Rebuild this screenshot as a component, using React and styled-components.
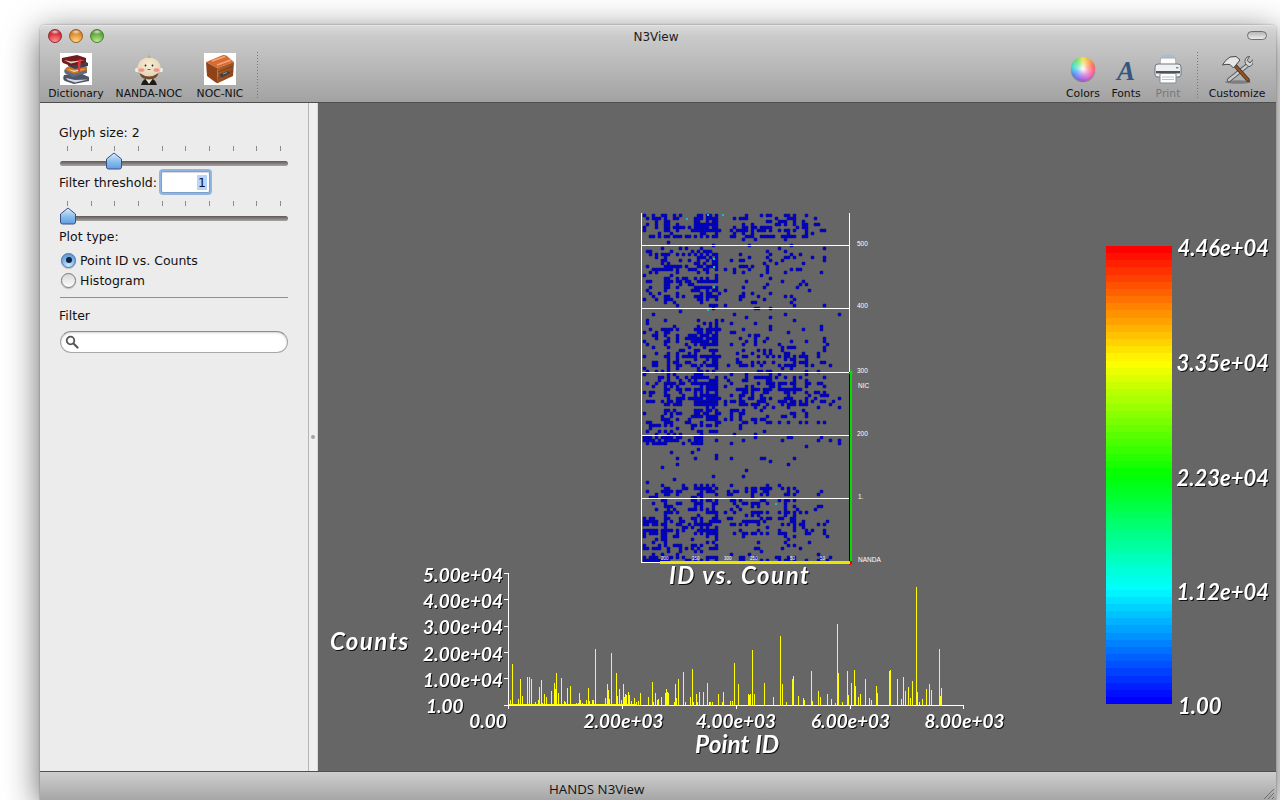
import React from 'react'
import styled, { createGlobalStyle } from 'styled-components'

const GlobalStyle = createGlobalStyle`
  html, body { margin: 0; height: 100%; background: #fff; overflow: hidden; }
  #root { height: 100%; }
  * { box-sizing: border-box; }
`

const UI_FONT = '"DejaVu Sans", "Liberation Sans", sans-serif'

const Page = styled.div`
  height: 800px;
  padding: 25px 4px 0 40px;
  font-family: ${UI_FONT};
  color: #111;
`
const Window = styled.div`
  height: 775px;
  display: flex;
  flex-direction: column;
  border-radius: 5px 5px 0 0;
  box-shadow: 0 8px 34px rgba(0, 0, 0, 0.62), 0 0 2px rgba(0, 0, 0, 0.4);
`
const Head = styled.header`
  height: 78px;
  flex: none;
  display: flex;
  flex-direction: column;
  border-radius: 5px 5px 0 0;
  background: linear-gradient(#d9d9d9 0, #cbcbcb 10px, #a2a2a2 100%);
  border-top: 1px solid #e6e6e6;
  border-bottom: 1px solid #4e4e4e;
`
const TitleBar = styled.div`
  height: 21px;
  flex: none;
  position: relative;
  display: flex;
  align-items: center;
  justify-content: center;
`
const Lights = styled.div`
  position: absolute;
  left: 8px;
  top: 3px;
  display: flex;
  gap: 7px;
`
const Light = styled.span`
  width: 14px;
  height: 14px;
  border-radius: 50%;
  border: 1px solid ${(p) => p.$edge};
  background:
    radial-gradient(ellipse 5px 2.5px at 50% 15%, rgba(255, 255, 255, 0.75) 0, rgba(255, 255, 255, 0) 100%),
    radial-gradient(circle at 50% 100%, ${(p) => p.$glow} 0, ${(p) => p.$base} 65%, ${(p) => p.$edge} 100%);
`
const Title = styled.span`
  font-size: 12px;
  color: #1c1c1c;
  position: relative;
  left: -2px;
`
const Pill = styled.span`
  position: absolute;
  right: 9px;
  top: 5px;
  width: 20px;
  height: 9px;
  border-radius: 5px;
  border: 1px solid #6d6d6d;
  background: linear-gradient(#b5b5b5, #ececec);
`
const ToolBar = styled.div`
  flex: 1;
  display: flex;
  align-items: flex-start;
`
const ToolGroup = styled.div`
  display: flex;
  width: ${(p) => p.$w}px;
  flex: none;
`
const Spring = styled.div`
  flex: 1;
`
const Tool = styled.div`
  width: ${(p) => p.$w}px;
  flex: none;
  display: flex;
  flex-direction: column;
  align-items: center;
  font-size: 10.8px;
  line-height: 13px;
  white-space: nowrap;
  color: ${(p) => (p.$off ? '#777' : '#111')};
`
const ToolIcon = styled.svg`
  width: 32px;
  height: 32px;
  margin: 6px 0 2px;
  display: block;
  flex: none;
`
const ColorWheel = styled.span`
  width: 24px;
  height: 24px;
  margin: 10px 4px 6px;
  flex: none;
  display: block;
  border-radius: 50%;
  background:
    radial-gradient(circle, #fff 0, rgba(255, 255, 255, 0.45) 32%, rgba(255, 255, 255, 0) 72%),
    conic-gradient(#f0e040 0deg, #ff6040 70deg, #f050b0 130deg, #9050e0 190deg, #4080f0 240deg, #30d8d0 280deg, #60e060 325deg, #f0e040 360deg);
  box-shadow: 0 1px 1px rgba(0, 0, 0, 0.35);
`
const ToolSep = styled.div`
  width: 1px;
  height: 46px;
  margin-top: 5px;
  flex: none;
  background: repeating-linear-gradient(#777 0 1px, transparent 1px 3px);
`

const Body = styled.main`
  flex: 1;
  min-height: 0;
  display: flex;
`
const Sidebar = styled.aside`
  width: 268px;
  flex: none;
  background: #ececec;
  padding: 21px 20px 0 19px;
  font-size: 12.5px;
  display: flex;
  flex-direction: column;
`
const Label = styled.div`
  height: 16px;
  line-height: 17px;
  white-space: nowrap;
  margin-top: ${(p) => p.$top || 0}px;
`
const SliderBox = styled.div`
  position: relative;
  height: 25px;
  margin-left: 1px;
  margin-top: ${(p) => p.$top}px;
`
const Ticks = styled.div`
  display: flex;
  justify-content: space-between;
  padding: 0 7px;
  height: 5px;
  i {
    width: 1px;
    height: 5px;
    background: #8c8c8c;
    display: block;
  }
`
const Track = styled.div`
  height: 5px;
  margin-top: 10px;
  border-radius: 3px;
  background: linear-gradient(#5f5856, #8a8483 60%, #a8a4a3);
`
const Thumb = styled.svg`
  position: absolute;
  top: 6px;
  left: ${(p) => p.$left}px;
  width: 18px;
  height: 18px;
`
const ThresholdRow = styled.div`
  display: flex;
  align-items: center;
  gap: 4px;
  height: 22px;
`
const NumberBox = styled.div`
  width: 49px;
  height: 22px;
  background: #fff;
  border: 1px solid #7f9fc9;
  box-shadow: 0 0 0 2px #8fb6e0, inset 0 1px 1px rgba(0, 0, 0, 0.15);
  border-radius: 2px;
  display: flex;
  justify-content: flex-end;
  align-items: center;
  padding-right: 2px;
  span {
    background: #b5d5ff;
    width: 10px;
    height: 15px;
    line-height: 15px;
    text-align: center;
  }
`
const RadioRow = styled.div`
  display: flex;
  align-items: center;
  height: 20px;
  gap: 4px;
  padding-left: 2px;
  margin-top: ${(p) => p.$top || 0}px;
`
const Radio = styled.span`
  width: 15px;
  height: 15px;
  border-radius: 50%;
  flex: none;
  display: flex;
  align-items: center;
  justify-content: center;
  border: 1px solid ${(p) => (p.$on ? '#4a6f9c' : '#777')};
  background: ${(p) =>
    p.$on
      ? 'radial-gradient(circle at 50% 90%, #cfeaff 0, #72ade6 60%, #5d93cc 100%)'
      : 'linear-gradient(#d8d8d8, #fcfcfc)'};
  box-shadow: 0 1px 1px rgba(0, 0, 0, 0.2);
  &::after {
    content: '';
    display: ${(p) => (p.$on ? 'block' : 'none')};
    width: 6px;
    height: 6px;
    border-radius: 50%;
    background: #10233f;
  }
`
const Rule = styled.hr`
  border: 0;
  height: 1px;
  background: #909090;
  margin: 7px 0 9px 1px;
  flex: none;
`
const Search = styled.div`
  height: 22px;
  margin: 8px 0 0 1px;
  border-radius: 11px;
  background: #fff;
  border: 1px solid #a8a8a8;
  border-top-color: #8e8e8e;
  box-shadow: inset 0 1px 2px rgba(0, 0, 0, 0.18);
  display: flex;
  align-items: center;
  padding-left: 4px;
`
const Splitter = styled.div`
  width: 10px;
  flex: none;
  background: #efefef;
  border-left: 1px solid #b4b4b4;
  border-right: 1px solid #d8d8d8;
  display: flex;
  align-items: center;
  justify-content: center;
  &::after {
    content: '';
    width: 4px;
    height: 4px;
    border-radius: 50%;
    background: #a5a5a5;
  }
`
const Canvas = styled.section`
  flex: 1;
  min-width: 0;
  background: #666;
  svg {
    display: block;
    width: 100%;
    height: 100%;
  }
`
const PlotText = styled.text`
  font-family: Lato, "Liberation Sans", sans-serif;
  font-style: italic;
  font-weight: 700;
  fill: #fff;
  letter-spacing: ${(p) => p.$spacing || 0}px;
  filter: drop-shadow(1.4px 1.4px 0 #111);
`
const TinyText = styled.text`
  font-family: "Liberation Sans", sans-serif;
  font-size: ${(p) => p.$size}px;
  fill: #fff;
`
const StatusBar = styled.footer`
  height: 29px;
  flex: none;
  position: relative;
  background: linear-gradient(#cecece, #a6a6a6);
  border-top: 1px solid #4f4f4f;
  font-family: "Open Sans", sans-serif;
  font-size: 13.3px;
  padding: 8px 0 0 509px;
  line-height: 18px;
  white-space: nowrap;
`
const Grip = styled.svg`
  position: absolute;
  right: 2px;
  bottom: 1px;
  width: 12px;
  height: 12px;
`

// bars read off the picture: [x, top y]
const bars = [
  [512.3, 664], [511.6, 687], [510, 700], [518.3, 699], [520.3, 679], [522.3, 696], [527, 677], [529, 677], [531, 679],
  [535.3, 702], [538.3, 700], [539.3, 687], [541.3, 680], [542.3, 703], [544.3, 694], [546.3, 697], [551.3, 691],
  [554.3, 683], [555.3, 689], [556.3, 673], [558.3, 693], [561.3, 678], [564.3, 701], [565.3, 702], [567.3, 688],
  [570.3, 686], [576.3, 703], [578.3, 703], [579.3, 693], [580.3, 700], [582.3, 703], [586.3, 700], [588.3, 688],
  [589.3, 701], [592.3, 700], [593.3, 700], [595.3, 649], [605.3, 698], [607.3, 684], [608.3, 690], [609.3, 699],
  [611.3, 653], [616.3, 673], [617.3, 696], [619.3, 689], [621.3, 700], [623.3, 684], [624.3, 697], [625.3, 694],
  [626.3, 695], [628.3, 692], [629.3, 695], [631.3, 701], [634.3, 698], [636.3, 702], [638.3, 701], [640.3, 693],
  [648.3, 697], [652.3, 682], [653.3, 702], [655.3, 693], [657.3, 700], [658.3, 699], [661.3, 697], [665.3, 693],
  [666, 689], [664.7, 693], [667, 692], [668, 693], [674.3, 702], [675.3, 684], [676.3, 698], [678.3, 679],
  [683.3, 672], [685.3, 702], [690.3, 697], [692.3, 669], [693.3, 702], [696.3, 694], [697.3, 702], [699.3, 692],
  [703.3, 692], [707.3, 683], [709.3, 702], [710.3, 702], [712.3, 702], [718.3, 694], [722.3, 702], [723.3, 692],
  [730.3, 701], [732.3, 701], [734.3, 663], [738.3, 684], [748.3, 694], [749.3, 695], [750.3, 694], [752.3, 650],
  [754.3, 694], [764.3, 683], [773.3, 697], [780.3, 636], [782.3, 684], [786.3, 702], [792.3, 679], [793.3, 676],
  [798.3, 696], [803.3, 698], [804.3, 700], [811.3, 671], [812.3, 701], [818.3, 691], [820.3, 697], [827.3, 694],
  [831.3, 699], [835.3, 703], [837.3, 624], [838.3, 673], [842.3, 702], [847.3, 671], [848.3, 695], [851.3, 683],
  [854.3, 670], [855.3, 686], [858.3, 697], [860.3, 694], [865.3, 679], [869.3, 698], [871.3, 700], [876.3, 686],
  [877.3, 693], [889.3, 671], [890.3, 670], [897.3, 679], [901.3, 699], [903.3, 677], [905.3, 691], [908.3, 687],
  [910.3, 698], [912.3, 681], [916.3, 587], [917.3, 692], [919.3, 702], [922.3, 699], [926.3, 689], [929.3, 684],
  [931.3, 690], [939.3, 649], [940.3, 696], [941.3, 688],
]

const gridLines = [245.5, 308.5, 372, 435.5, 498.5]

// repeatable pseudo random numbers so the plot stays the same on every load
const makeRandom = (seed) => () => {
  seed = (seed * 1664525 + 1013904223) % 4294967296
  return seed / 4294967296
}

// density across the columns of the scatter, x from 642 to 849
const columnWeight = (x) => {
  if (x < 645) return 0.3
  if (x < 660) return 0.5
  if (x >= 662 && x < 684) return 0.85
  if (x >= 694 && x < 716) return 1.15
  if (x < 694) return 0.5
  if (x >= 728 && x < 747) return 0.75
  if (x >= 750 && x < 772) return 0.75
  if (x >= 778 && x < 806) return 0.65
  if (x >= 816 && x < 824) return 0.7
  return 0.12
}

// density down the rows, y from 213 to 562
const rowWeight = (y, x) => {
  if (y < 236) return x > 825 ? 0.05 : 0.7
  if (y < 250) return 0.06
  if (y < 300) return x < 718 ? 0.46 : x < 825 ? 0.18 : 0
  if (y < 325) return 0.12
  if (y < 345) return x < 720 ? 0.46 : 0.2
  if (y < 372) return 0.42
  if (y < 392) return 0.5
  if (y < 408) return 0.52
  if (y < 423) return 0.32
  if (y < 434) return x < 725 ? 0.28 : 0.03
  if (y < 445) return x < 672 || x > 815 ? 0.8 : x < 702 ? 0.4 : 0.04
  if (y < 482) return 0.05
  if (y < 505) return x < 790 ? 0.46 : 0.16
  if (y < 517) return x > 650 && x < 800 ? 0.55 : 0.2
  return x < 665 ? 0.95 : 0.36
}

const makeDots = () => {
  const random = makeRandom(7741)
  // rows and columns come in streaks, as in the original data
  const streak = {}
  for (let i = 214; i < 560; i += 3) streak[`r${i}`] = 0.35 + random() * 1.3
  for (let i = 643; i < 846; i += 3) streak[`c${i}`] = 0.25 + random() * 1.5
  const dots = []
  for (let y = 214; y < 560; y += 3) {
    for (let x = 643; x < 846; x += 3) {
      const chance = columnWeight(x) * rowWeight(y, x) * streak[`r${y}`] * streak[`c${x}`]
      if (random() < chance) dots.push([x, y])
    }
  }
  return dots
}
const dots = makeDots()

const cyanDots = [[686, 218], [707, 214], [722, 214], [713, 258], [713, 266], [713, 286], [707, 309], [775, 503]]

// stepped red-yellow-green-cyan-blue legend, top to bottom
const legendColor = (t) => {
  const c = (v) => Math.round(Math.max(0, Math.min(1, v)) * 255)
  if (t < 0.25) return `rgb(255,${c(t * 4)},0)`
  if (t < 0.5) return `rgb(${c(2 - t * 4)},255,0)`
  if (t < 0.75) return `rgb(0,255,${c(t * 4 - 2)})`
  return `rgb(0,${c(4 - t * 4)},255)`
}
const legendSteps = Array.from({ length: 64 }, (_, i) => i)

const yLabels = [
  ['5.00e+04', 581.5], ['4.00e+04', 607.5], ['3.00e+04', 634], ['2.00e+04', 660.5], ['1.00e+04', 687],
]
const xLabels = [
  ['0.00', 488], ['2.00e+03', 623.5], ['4.00e+03', 736], ['6.00e+03', 850.5], ['8.00e+03', 964.5],
]
const legendLabels = [
  ['4.46e+04', 256], ['3.35e+04', 371], ['2.23e+04', 486], ['1.12e+04', 600],
]
const tinyLabels = [
  ['500', 857, 246], ['400', 857, 308], ['300', 857, 373], ['NIC', 858, 388], ['200', 857, 436], ['1.', 858, 499], ['NANDA', 858, 562],
]
const tinyBottom = [['200', 661], ['350', 692], ['300', 724], ['250', 750], ['50', 790], ['50', 820]]

function Plot() {
  return (
    <svg viewBox="318 103 958 668" preserveAspectRatio="none">
      {/* scatter of NANDA against NIC */}
      {dots.map(([x, y]) => (
        <rect key={`${x}-${y}`} x={x} y={y} width="3" height="3" rx="0.8" fill="#0000e0" stroke="#00007a" strokeWidth="0.5" />
      ))}
      {cyanDots.map(([x, y]) => (
        <rect key={`${x}-${y}`} x={x} y={y} width="2" height="2" fill="#00c8c8" />
      ))}
      <g shapeRendering="crispEdges">
        {gridLines.map((y) => (
          <rect key={y} x="642" y={y - 0.5} width="208" height="1" fill="#fff" />
        ))}
        <rect x="641" y="213" width="1" height="350" fill="#fff" />
        <rect x="849" y="213" width="1" height="159" fill="#fff" />
        <rect x="642" y="562" width="20" height="1" fill="#fff" />
        <rect x="849" y="372" width="1" height="190" fill="#000" />
        <rect x="850" y="372" width="2" height="190" fill="#00e000" />
        <rect x="660" y="561" width="190" height="3" fill="#e6e600" />
        <rect x="850" y="561" width="2" height="3" fill="#f00000" />
        <rect x="849" y="564" width="2" height="1" fill="#f00000" />
      </g>
      <path d="M849 374 L851 369 L853 374 Z" fill="#00e000" />
      {tinyLabels.map(([t, x, y]) => (
        <TinyText key={t} x={x} y={y} $size={6.5}>{t}</TinyText>
      ))}
      {tinyBottom.map(([t, x], i) => (
        <TinyText key={i} x={x} y={559.5} $size={4.5}>{t}</TinyText>
      ))}

      {/* counts per point */}
      <g shapeRendering="crispEdges" fill="#ffff00">
        {bars.map(([x, top], i) => (
          <rect key={i} x={Math.round(x)} y={top} width="1" height={705 - top} />
        ))}
        <rect x="508" y="704" width="128" height="1" />
      </g>
      <g shapeRendering="crispEdges" stroke="#fff" strokeWidth="1" fill="none">
        <path d="M508.5 573 V705 M508.5 705 H964" />
        <path d="M504 573.5 H508 M504 599.5 H508 M504 626.5 H508 M504 652.5 H508 M504 678.5 H508 M504 705 H508" />
        <path d="M508.5 705 V709 M622.5 705 V709 M736.5 705 V709 M850.5 705 V709 M963.5 705 V709" />
      </g>
      {yLabels.map(([t, y]) => (
        <PlotText key={t} x="503" y={y} fontSize="19" textAnchor="end">{t}</PlotText>
      ))}
      <PlotText x="426" y="713" fontSize="19">1.00</PlotText>
      {xLabels.map(([t, cx]) => (
        <PlotText key={t} x={cx} y="728" fontSize="19" textAnchor="middle">{t}</PlotText>
      ))}
      <PlotText x="330" y="650" fontSize="24" $spacing={1.4}>Counts</PlotText>
      <PlotText x="669" y="584" fontSize="24" $spacing={1.6}>ID vs. Count</PlotText>
      <PlotText x="695" y="753" fontSize="24.5">Point ID</PlotText>

      {/* legend */}
      <g shapeRendering="crispEdges">
        {legendSteps.map((i) => (
          <rect key={i} x="1106" y={246 + i * 7.16} width="66" height="8" fill={legendColor(i / 63)} />
        ))}
      </g>
      <rect x="1106" y="704" width="66" height="6" fill="#666" />
      {legendLabels.map(([t, y]) => (
        <PlotText key={t} x="1269" y={y} fontSize="22" textAnchor="end">{t}</PlotText>
      ))}
      <PlotText x="1178" y="714" fontSize="22">1.00</PlotText>
    </svg>
  )
}

function ThumbShape({ left }) {
  return (
    <Thumb viewBox="0 0 18 18" $left={left}>
      <defs>
        <linearGradient id="thumbFill" x1="0" y1="0" x2="0" y2="1">
          <stop offset="0" stopColor="#dff0ff" />
          <stop offset="0.5" stopColor="#8fc0ee" />
          <stop offset="1" stopColor="#5f9de0" />
        </linearGradient>
      </defs>
      <path d="M9 1 L16.5 7 V15 Q16.5 17 14.5 17 H3.5 Q1.5 17 1.5 15 V7 Z" fill="url(#thumbFill)" stroke="#3e4f7e" strokeWidth="1" />
    </Thumb>
  )
}

function Slider({ left, top }) {
  return (
    <SliderBox $top={top}>
      <Ticks>
        {Array.from({ length: 10 }, (_, i) => <i key={i} />)}
      </Ticks>
      <Track />
      <ThumbShape left={left} />
    </SliderBox>
  )
}

function BooksIcon() {
  return (
    <ToolIcon viewBox="0 0 32 32">
      <rect width="32" height="32" fill="#fff" />
      <path d="M4 22 Q2 26 5 28 L14 31 L29 28 L29 24 L20 20 Z" fill="#4d5568" />
      <path d="M6 25 Q7 27 9 27.5 L15 29.5 L28 26.5 L15 27 Z" fill="#d5d9e2" />
      <path d="M5 16 Q3 19 6 21 L13 24 L27 20 V16 L19 13 Z" fill="#5f6a80" />
      <path d="M7 14 Q4 16 7 18 L14 21 L27 17 V14 L20 11 Z" fill="#cc7420" />
      <path d="M7 16 L14 19 L26 16 L14 17.5 Z" fill="#f3dcb0" />
      <path d="M8 9 L22 7 L28 10 V13 L15 16 L8 13 Z" fill="#3b3f58" />
      <path d="M2 5 Q1 8 3 10 L11 13 L26 9 V5 L17 2 Z" fill="#74191e" />
      <path d="M4 7 L11 10.5 L25 7 L11 8.6 Z" fill="#e9d3ba" />
      <path d="M18 7 L21 6 L20 20 L18 17 Z" fill="#d93a3a" />
    </ToolIcon>
  )
}

function MonkeyIcon() {
  return (
    <ToolIcon viewBox="0 0 32 32">
      <defs>
        <radialGradient id="monkeyHead" cx="0.5" cy="0.35" r="0.7">
          <stop offset="0" stopColor="#f6ecd6" />
          <stop offset="0.75" stopColor="#e6d6b6" />
          <stop offset="1" stopColor="#a98f6b" />
        </radialGradient>
      </defs>
      <path d="M8 32 Q10 25 16 25 Q22 25 24 32 Z" fill="#1e1a18" />
      <path d="M12.5 26 L16 31 L19.5 26 Z" fill="#e8e0d0" />
      <circle cx="4.2" cy="17" r="2.2" fill="#f4ecdf" />
      <circle cx="27.8" cy="17" r="2.2" fill="#f4ecdf" />
      <ellipse cx="16" cy="15" rx="11.5" ry="10.5" fill="url(#monkeyHead)" />
      <path d="M6.5 20 Q16 27 25.5 20 Q24 26.5 16 26.5 Q8 26.5 6.5 20 Z" fill="#6d4c32" />
      <path d="M14.5 5 L16 1.5 L18 5 Z" fill="#c9a77a" />
      <ellipse cx="8.5" cy="17" rx="3" ry="1.8" fill="#f0938a" />
      <ellipse cx="23.5" cy="17" rx="3" ry="1.8" fill="#f0938a" />
      <circle cx="12.5" cy="12.5" r="0.9" fill="#222" />
      <circle cx="19.5" cy="12.5" r="0.9" fill="#222" />
      <path d="M14.5 16.5 H17.5" stroke="#555" strokeWidth="0.9" />
    </ToolIcon>
  )
}

function CrateIcon() {
  return (
    <ToolIcon viewBox="0 0 32 32">
      <defs>
        <linearGradient id="crateSide" x1="0" y1="0" x2="1" y2="1">
          <stop offset="0" stopColor="#b9652a" />
          <stop offset="1" stopColor="#7d3d18" />
        </linearGradient>
      </defs>
      <rect width="32" height="32" fill="#fff" />
      <path d="M2 9 L19 2 Q21 1.5 23 3 L30 9 L13 15 Z" fill="#d96a33" />
      <path d="M8 8 L21 3.5 M13 12 L27 7" stroke="#f2a67a" strokeWidth="1.6" />
      <path d="M2 9 L13 15 L14 30 Q13 30.5 11 29 L3 23 Z" fill="#8e4318" />
      <path d="M13 15 L30 9 L29 23 L14 30 Z" fill="url(#crateSide)" />
      <path d="M14 19 L29 13 M14 25 L29 18" stroke="#6e3515" strokeWidth="0.7" />
      <path d="M15 21.5 L24 18 L26 20 L18 24.5 Z" fill="#3f3f46" />
      <path d="M19 21 L23 19.5" stroke="#c9c9c9" strokeWidth="0.7" />
    </ToolIcon>
  )
}

function FontIcon() {
  return (
    <ToolIcon viewBox="0 0 32 32">
      <text x="16" y="27" textAnchor="middle" fontFamily="Liberation Serif, serif" fontStyle="italic" fontWeight="700" fontSize="27" fill="#34577f">A</text>
    </ToolIcon>
  )
}

function PrinterIcon() {
  return (
    <ToolIcon viewBox="0 0 32 32">
      <path d="M10 2 H22 V5 H10 Z" fill="#a9bccf" />
      <path d="M8.5 5 H23.5 L24 12 H8 Z" fill="#fcfcfc" stroke="#a6acb4" />
      <path d="M3 14 Q3 11 6 11 H26 Q29 11 29 14 V22 Q29 24 26 24 H6 Q3 24 3 22 Z" fill="#eef0f2" stroke="#70767d" />
      <rect x="4" y="18" width="24" height="2.4" fill="#4d545e" />
      <path d="M8 20.5 H24 V29 Q24 30 23 30 H9 Q8 30 8 29 Z" fill="#fff" stroke="#858b93" />
      <path d="M10 24 H22 M10 26.5 H22" stroke="#bcc1c7" />
      <rect x="24" y="14" width="2.5" height="1.4" fill="#7a8088" />
    </ToolIcon>
  )
}

function ToolsIcon() {
  return (
    <ToolIcon viewBox="0 0 32 32">
      <ellipse cx="17" cy="29" rx="13" ry="1.8" fill="#000" opacity="0.28" />
      <path d="M28 11 L8 27" stroke="#55585c" strokeWidth="4.2" strokeLinecap="round" />
      <path d="M28 11 L8 27" stroke="#c8cbce" strokeWidth="2.4" strokeLinecap="round" />
      <path d="M26.5 13 Q21.5 8 26 4 L28.5 3.5 L26 7.5 L29 10 L32 6.5 Q33 12 28.5 13.5 Z" fill="#d3d6d8" stroke="#4d4d4d" strokeWidth="0.9" />
      <path d="M11 9 L27 27" stroke="#4a2712" strokeWidth="3.8" strokeLinecap="round" />
      <path d="M11 9 L27 27" stroke="#93552a" strokeWidth="2.2" strokeLinecap="round" />
      <path d="M1.5 12 Q4 7 9 4 L15 3.5 L19 7 L12.5 15 L9 11.5 Q5 11 1.5 12 Z" fill="#e4e6e8" stroke="#474747" strokeWidth="1" />
    </ToolIcon>
  )
}

export default function App() {
  return (
    <>
      <GlobalStyle />
      <Page>
        <Window>
          <Head>
            <TitleBar>
              <Lights>
                <Light $base="#d9303a" $glow="#ff9a9a" $edge="#8c2a2e" />
                <Light $base="#e08a2a" $glow="#ffe08a" $edge="#94602a" />
                <Light $base="#62a83a" $glow="#c2f0a0" $edge="#4b7e35" />
              </Lights>
              <Title>N3View</Title>
              <Pill />
            </TitleBar>
            <ToolBar>
              <ToolGroup $w={217}>
                <Tool $w={72}><BooksIcon />Dictionary</Tool>
                <Tool $w={74}><MonkeyIcon />NANDA-NOC</Tool>
                <Tool $w={68}><CrateIcon />NOC-NIC</Tool>
              </ToolGroup>
              <ToolSep />
              <Spring />
              <ToolGroup $w={131}>
                <Tool $w={34}><ColorWheel />Colors</Tool>
                <Tool $w={52}><FontIcon />Fonts</Tool>
                <Tool $w={32} $off><PrinterIcon />Print</Tool>
              </ToolGroup>
              <ToolSep />
              <ToolGroup $w={78}>
                <Tool $w={78}><ToolsIcon />Customize</Tool>
              </ToolGroup>
            </ToolBar>
          </Head>
          <Body>
            <Sidebar>
              <Label>Glyph size: 2</Label>
              <Slider left={45} top={6} />
              <ThresholdRow>
                <Label>Filter threshold:</Label>
                <NumberBox><span>1</span></NumberBox>
              </ThresholdRow>
              <Slider left={-1} top={8} />
              <Label $top={2}>Plot type:</Label>
              <RadioRow $top={6}><Radio $on />Point ID vs. Counts</RadioRow>
              <RadioRow><Radio />Histogram</RadioRow>
              <Rule />
              <Label>Filter</Label>
              <Search>
                <svg width="14" height="14" viewBox="0 0 14 14">
                  <circle cx="5.5" cy="5.5" r="3.8" fill="none" stroke="#555" strokeWidth="1.8" />
                  <path d="M8.5 8.5 L12.5 12.5" stroke="#555" strokeWidth="2.2" strokeLinecap="round" />
                </svg>
              </Search>
            </Sidebar>
            <Splitter />
            <Canvas><Plot /></Canvas>
          </Body>
          <StatusBar>
            HANDS N3View
            <Grip viewBox="0 0 12 12">
              <path d="M2 12 L12 2 M6 12 L12 6 M10 12 L12 10" stroke="#6e6e6e" strokeWidth="1" />
            </Grip>
          </StatusBar>
        </Window>
      </Page>
    </>
  )
}
